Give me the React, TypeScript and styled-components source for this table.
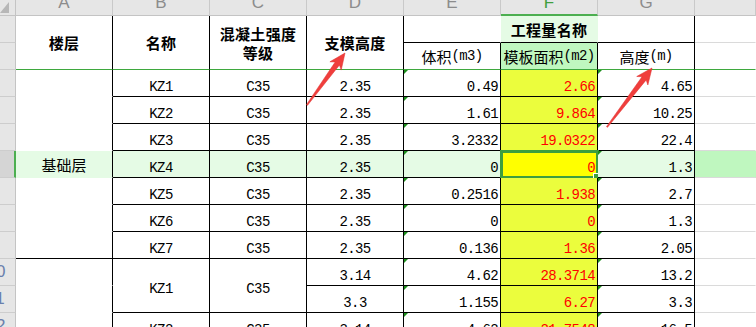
import React from "react";
import styled, { createGlobalStyle, css } from "styled-components";

const GlobalStyle = createGlobalStyle`
  html, body {
    margin: 0;
    padding: 0;
    width: 756px;
    height: 327px;
    overflow: hidden;
    background: #fff;
  }
`;

const COL_W = 97;
const ROW_H = 27;
const MONO = `"Liberation Mono", "Noto Sans CJK SC", monospace`;
const CJK = `"Noto Sans CJK SC", "Noto Sans", sans-serif`;

const GREEN_LIGHT = "#e5fbe5";
const GREEN_MID = "#bff7bf";
const YELLOW = "#ebfd3d";
const FREEZE = "#3ea83e";

const Page = styled.div`
  position: relative;
  width: 756px;
  height: 327px;
  overflow: hidden;
`;

const Sheet = styled.div`
  display: grid;
  grid-template-columns: 16px repeat(7, ${COL_W}px) 1fr;
  grid-template-rows: 16px repeat(12, ${ROW_H}px);
  width: 756px;
`;

const Corner = styled.div`
  grid-row: 1;
  grid-column: 1;
  background: #e6e6e6;
  border-right: 1px solid #c4c4c4;
  border-bottom: 1px solid #c4c4c4;
  box-sizing: border-box;
  svg {
    display: block;
  }
`;

const ColHead = styled.div<{ $c: number; $active?: boolean }>`
  grid-row: 1;
  grid-column: ${(p) => p.$c};
  box-sizing: border-box;
  background: #e6e6e6;
  border-right: 1px solid #c9c9c9;
  border-bottom: ${(p) => (p.$active ? `2px solid #4caf50` : `1px solid #c4c4c4`)};
  overflow: hidden;
  text-align: center;
  font-family: "Liberation Sans", Arial, sans-serif;
  font-size: 17px;
  line-height: 6px;
  color: ${(p) => (p.$active ? "#3f9f3f" : "#8c8c8c")};
`;

const RowHead = styled.div<{ $r: number; $active?: boolean }>`
  grid-row: ${(p) => p.$r};
  grid-column: 1;
  box-sizing: border-box;
  position: relative;
  overflow: hidden;
  background: ${(p) => (p.$active ? "#d5d5d5" : "#e6e6e6")};
  border-right: ${(p) => (p.$active ? `2px solid #4caf50` : `1px solid #c4c4c4`)};
  border-bottom: 1px solid #cdcdcd;
`;

const RowNum = styled.span`
  position: absolute;
  left: -24px;
  width: 40px;
  top: 0;
  bottom: 0;
  display: flex;
  align-items: center;
  justify-content: center;
  font-family: "Liberation Sans", Arial, sans-serif;
  font-size: 17px;
  color: #6a80ad;
`;

type Align = "left" | "center" | "right";

const Cell = styled.div<{
  $r: number;
  $c: number;
  $rs?: number;
  $align?: Align;
  $bg?: string;
  $nr?: boolean;
  $nb?: boolean;
  $bc?: string;
  $rc?: string;
  $red?: boolean;
  $mark?: boolean;
  $head?: boolean;
  $bold?: boolean;
}>`
  grid-row: ${(p) => p.$r} / span ${(p) => p.$rs ?? 1};
  grid-column: ${(p) => p.$c};
  position: relative;
  box-sizing: border-box;
  display: flex;
  align-items: center;
  justify-content: ${(p) =>
    p.$align === "right" ? "flex-end" : p.$align === "left" ? "flex-start" : "center"};
  padding: 0 2px;
  background: ${(p) => p.$bg ?? "#fff"};
  border-right: 1px solid ${(p) => p.$rc ?? (p.$nr ? "transparent" : "#000")};
  border-bottom: 1px solid ${(p) => p.$bc ?? (p.$nb ? "transparent" : "#000")};
  color: ${(p) => (p.$red ? "#ff0000" : "#000")};
  white-space: nowrap;
  ${(p) =>
    p.$head
      ? css`
          font-family: ${CJK};
          font-size: 15px;
          line-height: 19px;
          font-weight: ${p.$bold ? 700 : 400};
          letter-spacing: ${p.$bold ? "0.3px" : "0"};
          text-align: center;
        `
      : css`
          font-family: ${MONO};
          font-size: 14px;
          letter-spacing: -0.6px;
          padding-top: 7px;
        `}
  ${(p) =>
    p.$mark &&
    css`
      &::before {
        content: "";
        position: absolute;
        left: 0;
        top: 0;
        border-top: 4px solid #1d8f1d;
        border-right: 4px solid transparent;
      }
    `}
`;

const Unit = styled.span`
  font-family: ${MONO};
  font-size: 14px;
  letter-spacing: -0.7px;
`;

const Floor = styled.span`
  font-family: ${CJK};
  font-size: 15px;
  letter-spacing: 0;
  margin-top: -7px;
`;

const Selection = styled.div`
  position: absolute;
  left: -1px;
  top: -1px;
  right: -2px;
  bottom: -2px;
  border: 3px solid #3e9e3e;
  pointer-events: none;
`;

const Handle = styled.div`
  position: absolute;
  right: -4px;
  bottom: -4px;
  width: 5px;
  height: 5px;
  background: #3e9e3e;
  border: 1px solid #fff;
`;

const Arrows = styled.svg`
  position: absolute;
  left: 0;
  top: 0;
  pointer-events: none;
`;

const Arrow: React.FC<{ x1: number; y1: number; x2: number; y2: number }> = ({
  x1,
  y1,
  x2,
  y2,
}) => {
  const dx = x2 - x1;
  const dy = y2 - y1;
  const len = Math.sqrt(dx * dx + dy * dy);
  const ang = (Math.atan2(dy, dx) * 180) / Math.PI;
  const pts = [
    [0, -0.6],
    [len - 13, -2.6],
    [len - 16, -7],
    [len, 0],
    [len - 16, 7],
    [len - 13, 2.6],
    [0, 0.6],
  ]
    .map((p) => p.join(","))
    .join(" ");
  return (
    <polygon
      points={pts}
      fill="#f03e3c"
      stroke="#e0302e"
      strokeWidth="0.5"
      transform={`translate(${x1} ${y1}) rotate(${ang})`}
    />
  );
};

type Row = { b: string; c: string; d: string; e: string; f: string; g: string };

const rows: Row[] = [
  { b: "KZ1", c: "C35", d: "2.35", e: "0.49", f: "2.66", g: "4.65" },
  { b: "KZ2", c: "C35", d: "2.35", e: "1.61", f: "9.864", g: "10.25" },
  { b: "KZ3", c: "C35", d: "2.35", e: "3.2332", f: "19.0322", g: "22.4" },
  { b: "KZ4", c: "C35", d: "2.35", e: "0", f: "0", g: "1.3" },
  { b: "KZ5", c: "C35", d: "2.35", e: "0.2516", f: "1.938", g: "2.7" },
  { b: "KZ6", c: "C35", d: "2.35", e: "0", f: "0", g: "1.3" },
  { b: "KZ7", c: "C35", d: "2.35", e: "0.136", f: "1.36", g: "2.05" },
];

const letters = ["A", "B", "C", "D", "E", "F", "G", ""];
const ACTIVE_ROW = 6;

export default function App() {
  // grid row = sheet row + 1, grid col: A = 2 ... G = 8, H = 9
  return (
    <>
      <GlobalStyle />
      <Page>
        <Sheet>
          <Corner>
            <svg width="15" height="15">
              <polygon points="0,13 9,13 9,2" fill="#b7b7b7" />
            </svg>
          </Corner>
          {letters.map((l, i) => (
            <ColHead key={i} $c={i + 2} $active={l === "F"}>
              {l}
            </ColHead>
          ))}

          {Array.from({ length: 12 }, (_, i) => (
            <RowHead key={i} $r={i + 2} $active={i + 1 === ACTIVE_ROW}>
              {i + 1 >= 10 && <RowNum>{i + 1}</RowNum>}
            </RowHead>
          ))}

          {/* header rows 1-2 */}
          <Cell $r={2} $rs={2} $c={2} $head $bold $bc={FREEZE}>楼层</Cell>
          <Cell $r={2} $rs={2} $c={3} $head $bold $bc={FREEZE}>名称</Cell>
          <Cell $r={2} $rs={2} $c={4} $head $bold $bc={FREEZE}>
            混凝土强度
            <br />
            等级
          </Cell>
          <Cell $r={2} $rs={2} $c={5} $head $bold $bc={FREEZE}>支模高度</Cell>
          <Cell $r={2} $c={6} $head $nr />
          <Cell $r={2} $c={7} $head $bold $nr $bg={GREEN_LIGHT}>
            工程量名称
          </Cell>
          <Cell $r={2} $c={8} $head />
          <Cell $r={2} $c={9} $head $nr $bc="#dadada" />
          <Cell $r={3} $c={6} $head $bc={FREEZE}>
            体积<Unit>(m3)</Unit>
          </Cell>
          <Cell $r={3} $c={7} $head $bg={GREEN_MID} $bc={FREEZE}>
            模板面积<Unit>(m2)</Unit>
          </Cell>
          <Cell $r={3} $c={8} $head $bc={FREEZE}>
            高度<Unit>(m)</Unit>
          </Cell>
          <Cell $r={3} $c={9} $head $nr $bc={FREEZE} />

          {/* 基础层 rows 3-9 */}
          {rows.map((row, i) => {
            const sr = i + 3;
            const gr = sr + 1;
            const active = sr === ACTIVE_ROW;
            const bg = active ? GREEN_LIGHT : undefined;
            return (
              <React.Fragment key={sr}>
                <Cell $r={gr} $c={2} $bg={bg} $nb={sr !== 9}>
                  {active && <Floor>基础层</Floor>}
                </Cell>
                <Cell $r={gr} $c={3} $bg={bg}>{row.b}</Cell>
                <Cell $r={gr} $c={4} $bg={bg}>{row.c}</Cell>
                <Cell $r={gr} $c={5} $bg={bg}>{row.d}</Cell>
                <Cell $r={gr} $c={6} $bg={bg} $align="right" $mark>
                  {row.e}
                </Cell>
                <Cell
                  $r={gr}
                  $c={7}
                  $bg={active ? "#ffff00" : YELLOW}
                  $align="right"
                  $red
                >
                  {row.f}
                  {active && (
                    <Selection>
                      <Handle />
                    </Selection>
                  )}
                </Cell>
                <Cell $r={gr} $c={8} $bg={bg} $align="right" $mark>
                  {row.g}
                </Cell>
                <Cell
                  $r={gr}
                  $c={9}
                  $nr
                  $bc="#dadada"
                  $bg={active ? GREEN_MID : undefined}
                />
              </React.Fragment>
            );
          })}

          {/* rows 10-12 */}
          <Cell $r={11} $c={2} $nb />
          <Cell $r={12} $c={2} $nb />
          <Cell $r={13} $c={2} $nb />
          <Cell $r={11} $rs={2} $c={3}>KZ1</Cell>
          <Cell $r={11} $rs={2} $c={4}>C35</Cell>
          <Cell $r={11} $c={5}>3.14</Cell>
          <Cell $r={12} $c={5}>3.3</Cell>
          <Cell $r={11} $c={6} $align="right" $mark>4.62</Cell>
          <Cell $r={12} $c={6} $align="right" $mark>1.155</Cell>
          <Cell $r={11} $c={7} $align="right" $bg={YELLOW} $red>28.3714</Cell>
          <Cell $r={12} $c={7} $align="right" $bg={YELLOW} $red>6.27</Cell>
          <Cell $r={11} $c={8} $align="right" $mark>13.2</Cell>
          <Cell $r={12} $c={8} $align="right" $mark>3.3</Cell>
          <Cell $r={13} $c={3}>KZ2</Cell>
          <Cell $r={13} $c={4}>C35</Cell>
          <Cell $r={13} $c={5}>3.14</Cell>
          <Cell $r={13} $c={6} $align="right" $mark>4.62</Cell>
          <Cell $r={13} $c={7} $align="right" $bg={YELLOW} $red>21.7548</Cell>
          <Cell $r={13} $c={8} $align="right" $mark>16.5</Cell>
          <Cell $r={11} $c={9} $nr $bc="#dadada" />
          <Cell $r={12} $c={9} $nr $bc="#dadada" />
          <Cell $r={13} $c={9} $nr $bc="#dadada" />
        </Sheet>
        <Arrows width="756" height="327">
          <Arrow x1={307} y1={105} x2={345} y2={53} />
          <Arrow x1={607} y1={127} x2={652} y2={68} />
        </Arrows>
      </Page>
    </>
  );
}
